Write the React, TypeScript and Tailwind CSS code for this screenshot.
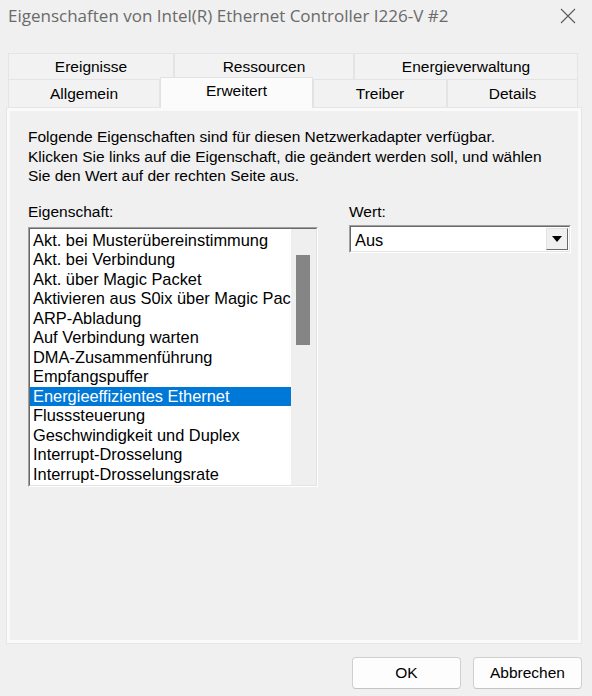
import React from "react";

const items = [
  "Akt. bei Musterübereinstimmung",
  "Akt. bei Verbindung",
  "Akt. über Magic Packet",
  "Aktivieren aus S0ix über Magic Pac",
  "ARP-Abladung",
  "Auf Verbindung warten",
  "DMA-Zusammenführung",
  "Empfangspuffer",
  "Energieeffizientes Ethernet",
  "Flusssteuerung",
  "Geschwindigkeit und Duplex",
  "Interrupt-Drosselung",
  "Interrupt-Drosselungsrate",
];

function Tab({ label, w, selected }: { label: string; w: string; selected?: boolean }) {
  return (
    <div
      className={
        selected
          ? `${w} relative z-10 -mt-[2px] -mb-[1px] flex items-start justify-center pt-[5px] bg-[#fbfbfb] border-t border-l border-r border-[#e2e2e2]`
          : `${w} flex items-center justify-center bg-[#f2f2f2] border-t border-l border-r border-[#e4e4e4]`
      }
    >
      <span className="text-[15.5px] text-black leading-none">{label}</span>
    </div>
  );
}

export default function App() {
  return (
    <div
      className="w-[592px] h-[696px] bg-[#f0f0f0] flex flex-col overflow-hidden"
      style={{ fontFamily: '"Liberation Sans", Arial, sans-serif' }}
    >
      {/* Title bar */}
      <div className="h-[31px] flex items-center justify-between pl-[8px] pr-[16px]">
        <span
          className="text-[17px] text-[#6a6a6a] whitespace-nowrap"
          style={{ fontFamily: '"Open Sans", "Noto Sans", sans-serif' }}
        >
          Eigenschaften von Intel(R) Ethernet Controller I226-V #2
        </span>
        <svg width="16" height="16" viewBox="0 0 16 16" className="mt-[1px]">
          <path d="M1 1 L15 15 M15 1 L1 15" stroke="#5a5a5a" strokeWidth="1.1" fill="none" />
        </svg>
      </div>

      {/* Tabs */}
      <div className="mt-[22px] px-[8px] flex flex-col">
        <div className="flex h-[26px] pr-[6px]">
          <Tab label="Ereignisse" w="w-[166px]" />
          <Tab label="Ressourcen" w="w-[180px]" />
          <Tab label="Energieverwaltung" w="w-[224px]" />
        </div>
        <div className="flex h-[28px] pr-[6px]">
          <Tab label="Allgemein" w="w-[152px]" />
          <Tab label="Erweitert" w="w-[153px]" selected />
          <Tab label="Treiber" w="w-[134px]" />
          <Tab label="Details" w="w-[131px]" />
        </div>
      </div>

      {/* Panel */}
      <div className="mx-[6px] w-[576px] h-[537px] border border-[#e6e6e6] shadow-[inset_0_0_0_3px_#fafafa] bg-[#f0f0f0] pt-[19px] pl-[21px] pr-[10px]">
        <div className="text-[15.5px] leading-[19.5px] text-black">
          <div>Folgende Eigenschaften sind für diesen Netzwerkadapter verfügbar.</div>
          <div>Klicken Sie links auf die Eigenschaft, die geändert werden soll, und wählen</div>
          <div>Sie den Wert auf der rechten Seite aus.</div>
        </div>

        <div className="mt-[16px] flex">
          {/* Left column */}
          <div className="w-[290px] flex flex-col">
            <div className="text-[15.5px] leading-[20px] text-black">Eigenschaft:</div>
            <div className="mt-[5px] w-[290px] h-[260px] border border-t-[#a0a0a0] border-l-[#a0a0a0] border-b-[#ffffff] border-r-[#ffffff]">
              <div className="w-full h-full border border-t-[#696969] border-l-[#696969] border-b-[#e3e3e3] border-r-[#e3e3e3] bg-white flex">
                <div className="flex-1 overflow-hidden pt-[2px]">
                  {items.map((it, i) => (
                    <div
                      key={it}
                      className={
                        i === 8
                          ? "h-[19.5px] leading-[19.5px] pl-[3px] text-[16.4px] whitespace-nowrap bg-[#0078d7] text-white"
                          : "h-[19.5px] leading-[19.5px] pl-[3px] text-[16.4px] whitespace-nowrap text-black"
                      }
                    >
                      {it}
                    </div>
                  ))}
                </div>
                <div className="w-[25px] bg-[#efefef] flex justify-start pl-[5px] pt-[26px]">
                  <div className="w-[14px] h-[90px] bg-[#858585]" />
                </div>
              </div>
            </div>
          </div>

          {/* Right column */}
          <div className="ml-[31px] w-[222px] flex flex-col">
            <div className="text-[15.5px] leading-[20px] text-black">Wert:</div>
            <div className="mt-[3px] w-[222px] h-[28px] border border-t-[#a0a0a0] border-l-[#a0a0a0] border-b-[#ffffff] border-r-[#ffffff]">
              <div className="w-full h-full border border-t-[#696969] border-l-[#696969] border-b-[#e3e3e3] border-r-[#e3e3e3] bg-white flex items-center">
                <span className="flex-1 pl-[4px] pt-[3px] text-[16.4px] text-black leading-none">Aus</span>
                <div className="w-[22px] h-[22px] mr-[1px] bg-[#f0f0f0] border border-t-[#e3e3e3] border-l-[#e3e3e3] border-b-[#696969] border-r-[#696969] flex items-center justify-center">
                  <svg width="10" height="6" viewBox="0 0 10 6">
                    <path d="M0 0 H10 L5 6 Z" fill="#000" />
                  </svg>
                </div>
              </div>
            </div>
          </div>
        </div>
      </div>

      {/* Buttons */}
      <div className="mt-[13px] flex justify-end gap-[12px] pr-[10px]">
        <button className="w-[109px] h-[32px] bg-[#fdfdfd] border border-[#d0d0d0] border-b-[#c4c4c4] rounded-[4px] text-[15.5px] text-black">
          OK
        </button>
        <button className="w-[109px] h-[32px] bg-[#fdfdfd] border border-[#d0d0d0] border-b-[#c4c4c4] rounded-[4px] text-[15.5px] text-black">
          Abbrechen
        </button>
      </div>
    </div>
  );
}
